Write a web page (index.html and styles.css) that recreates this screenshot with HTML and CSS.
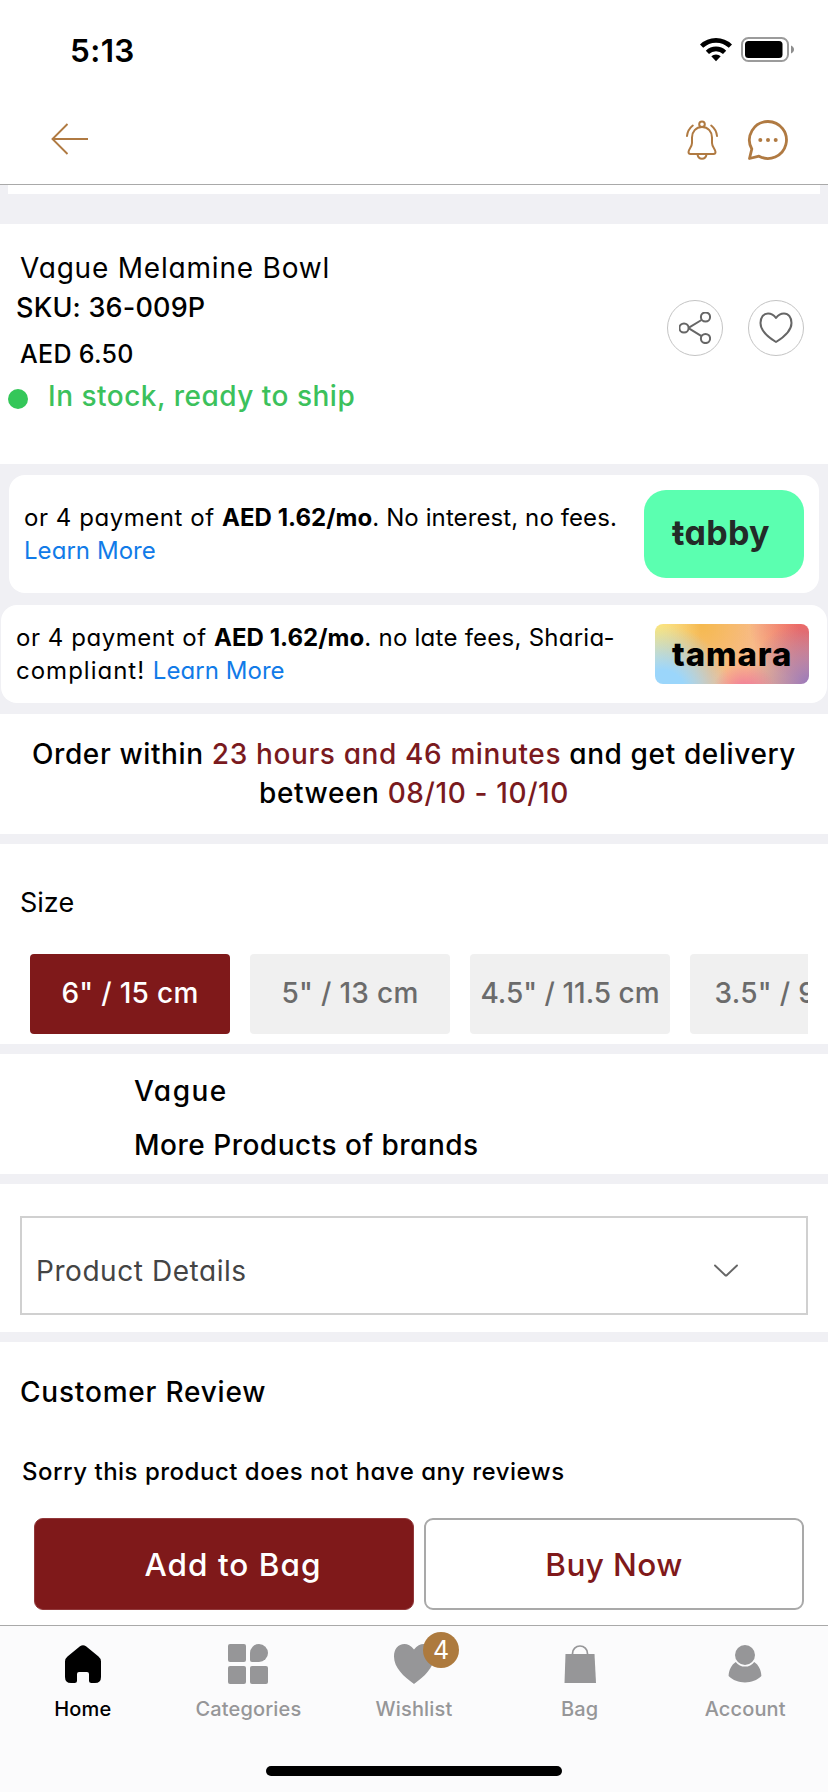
FILE: index.html
```html
<!DOCTYPE html>
<html lang="en">
<head>
<meta charset="utf-8">
<title>Vague Melamine Bowl</title>
<link rel="stylesheet" href="styles.css">
</head>
<body>
<div class="screen">
  <header class="header">
    <div class="status">
      <span class="time">5:13</span>
      <div class="status-icons">
        <svg width="32" height="24" viewBox="0 0 32 24" fill="none" stroke="#000" stroke-width="4.6"><path d="M1.6 8.2a20.6 20.6 0 0 1 28.800 0"/><path d="M7.400 14.300a12.400 12.400 0 0 1 17.200 0"/><path d="M11.300 18.300a6.800 6.800 0 0 1 9.400 0L16 23.200z" fill="#000" stroke="none"/></svg>
        <svg width="54" height="26" viewBox="0 0 54 26"><rect x="1" y="1" width="46" height="23" rx="6.500" fill="none" stroke="#9b9b9b" stroke-width="2"/><rect x="4" y="4" width="37.500" height="17" rx="3.500"/><path d="M50 8.500c4 1.500 4 6.500 0 8z" fill="#8e8e8e"/></svg>
      </div>
    </div>
    <div class="navbar">
      <svg class="back" width="38" height="32" viewBox="0 0 38 32" fill="none" stroke="#b07a42" stroke-width="1.900"><path d="M37 16H1.500M16.500 1L1.500 16l15 15"/></svg>
      <div class="nav-actions">
        <svg width="34" height="40" viewBox="0 0 34 40" fill="none" stroke="#b07a42" stroke-width="2" stroke-linecap="round" stroke-linejoin="round"><circle cx="17" cy="4.300" r="2.800"/><path d="M17 7c-6.200 0-10 4.800-10 10.500v5.500c0 4-3.500 6-3.500 9 0 1.400.9 2 2 2h23c1.100 0 2-.6 2-2 0-3-3.500-5-3.500-9v-5.500C27 11.800 23.200 7 17 7z"/><path d="M12.500 34.500c.5 2.800 2.300 4.200 4.500 4.200s4-1.400 4.500-4.200M7.800 5.500C4.600 8 2.500 11.500 2 16M26.200 5.500C29.400 8 31.500 11.500 32 16"/></svg>
        <svg width="42" height="42" viewBox="0 0 42 42"><path d="M21 2.500A18.500 18.500 0 0 0 4.800 30L2.500 39.500l9.500-2.300A18.500 18.500 0 1 0 21 2.500z" fill="none" stroke="#b07a42" stroke-width="2.800" stroke-linejoin="round"/><g fill="#b07a42"><circle cx="13.300" cy="21" r="2"/><circle cx="21" cy="21" r="2"/><circle cx="28.700" cy="21" r="2"/></g></svg>
      </div>
    </div>
  </header>
  <div class="gallery-end"></div>

  <section class="product">
    <div class="product-info">
      <h1 class="title">Vague Melamine Bowl</h1>
      <p class="sku">SKU: 36-009P</p>
      <p class="price">AED 6.50</p>
      <p class="stock"><i class="dot"></i>In stock, ready to ship</p>
    </div>
    <div class="product-actions">
      <button class="round"><svg width="32" height="32" viewBox="0 0 32 32" fill="none" stroke="#666" stroke-width="2"><circle cx="5" cy="16" r="4.600"/><circle cx="26.500" cy="5" r="4.600"/><circle cx="26.500" cy="26.500" r="4.600"/><path d="M9.500 15.800L22.500 8M9.500 16.200l13 8"/></svg></button>
      <button class="round"><svg width="34" height="32" viewBox="0 0 34 32" fill="none" stroke="#666" stroke-width="2" stroke-linejoin="round"><path d="M17 6C14.500 2.500 11.500 1.500 9 1.500 4.500 1.500 1.500 5.500 1.500 11c0 8 6.500 13.500 15.500 19 9-5.500 15.500-11 15.500-19 0-5.500-3-9.500-7.500-9.500-2.500 0-5.500 1-8 4.500z"/></svg></button>
    </div>
  </section>

  <section class="payments">
    <div class="pay pay-tabby">
      <p class="pay-text"><span class="lead">or 4 payment of </span><b>AED 1.62/mo</b>. No interest, no fees.<br><a>Learn More</a></p>
      <div class="tabby">ŧabby</div>
    </div>
    <div class="pay pay-tamara">
      <p class="pay-text"><span class="lead">or 4 payment of </span><b>AED 1.62/mo</b><span class="tail">. no late fees, Sharia-</span><br><span class="lead lead-wide">compliant! </span><a>Learn More</a></p>
      <div class="tamara">tamara</div>
    </div>
  </section>

  <section class="delivery">
    <p>Order within <em>23 hours and 46 minutes</em> and get delivery<br>between <em>08/10 - 10/10</em></p>
  </section>

  <section class="sizes">
    <h2 class="size-label">Size</h2>
    <div class="chips">
      <div class="chip chip-on">6" / 15 cm</div>
      <div class="chip">5" / 13 cm</div>
      <div class="chip chip-long">4.5" / 11.5 cm</div>
      <div class="chip">3.5" / 9 cm</div>
    </div>
  </section>

  <section class="brand">
    <p class="brand-name">Vague</p>
    <p>More Products of brands</p>
  </section>

  <section class="details">
    <div class="details-box"><span>Product Details</span>
      <svg width="26" height="16" viewBox="0 0 26 16" fill="none" stroke="#666" stroke-width="1.900" stroke-linecap="round" stroke-linejoin="round"><path d="M2 2.500L12 12q1 1 2 0L24 2.500"/></svg>
    </div>
  </section>

  <section class="reviews">
    <h2>Customer Review</h2>
    <p>Sorry this product does not have any reviews</p>
    <div class="cta">
      <button class="btn btn-add">Add to Bag</button>
      <button class="btn btn-buy">Buy Now</button>
    </div>
  </section>

  <nav class="tabs">
    <div class="tab tab-on"><svg width="40" height="40" viewBox="0 0 40 40"><path d="M17 2.300q3-2.300 6 0l12.500 10.200q2.500 2 2.500 5V33q0 6-6 6h-3.500q-2.500 0-2.500-2.500V30q0-2-2-2h-8q-2 0-2 2v6.500q0 2.500-2.500 2.500H8q-6 0-6-6V17.500q0-3 2.500-5z"/></svg><span>Home</span></div>
    <div class="tab"><svg width="40" height="40" viewBox="0 0 40 40" fill="#969698"><rect width="18" height="18" rx="2"/><path d="M22 9a9 9 0 1 1 9 9h-7q-2 0-2-2z"/><rect y="22" width="18" height="18" rx="2"/><rect x="22" y="22" width="18" height="18" rx="2"/></svg><span>Categories</span></div>
    <div class="tab"><svg width="40" height="40" viewBox="0 0 40 40" fill="#969698"><path d="M20 5.500C17 1.500 13.500 0 10.500 0 4 0 0 5 0 12.500c0 11 9.500 20 20 27.500 10.500-7.500 20-16.500 20-27.500C40 5 36 0 29.500 0 26.500 0 23 1.500 20 5.500z"/></svg><span>Wishlist</span><span class="badge">4</span></div>
    <div class="tab"><svg width="40" height="40" viewBox="0 0 40 40"><path d="M5.500 10h29L36 39H4.500z" fill="#969698"/><path d="M12.500 11V9.500a7.500 7.500 0 0 1 15 0V11" fill="none" stroke="#969698" stroke-width="1.700"/></svg><span>Bag</span></div>
    <div class="tab"><svg width="40" height="40" viewBox="0 0 40 40" fill="#969698"><circle cx="20" cy="11" r="10"/><path d="M10.800 18a11.500 11.500 0 0 0 18.400 0c4.500 3 7 8 7.200 14C28 40.500 12 40.500 3.600 32c.2-6 2.700-11 7.200-14z"/></svg><span>Account</span></div>
    <div class="home-bar"></div>
  </nav>
</div>
</body>
</html>
```
FILE: styles.css
```css
* { box-sizing: border-box; margin: 0; padding: 0; }
body { background: #fff; }
.screen { width: 828px; height: 1792px; overflow: hidden; display: flex; flex-direction: column; background: #f0f0f4; color: #000; font-family: Inter, sans-serif; font-feature-settings: "cv11"; }
h1, h2 { font-weight: 400; }
p, h1, h2, span { white-space: nowrap; }
svg { display: block; flex: none; }
em { font-style: normal; color: #7a1a1e; }
button { border: 0; background: none; font: inherit; font-feature-settings: inherit; color: inherit; }

.header { height: 185px; flex: none; background: #fff; border-bottom: 1px solid #a9a9a9; }
.status { height: 100px; display: flex; justify-content: space-between; padding: 0 33px 0 70px; align-items: center; }
.time { font-size: 31.5px; font-weight: 600; letter-spacing: .4px; }
.status-icons { display: flex; gap: 9px; align-items: center; }
.navbar { height: 78px; display: flex; justify-content: space-between; align-items: center; padding: 0 39px 0 51px; }
.nav-actions { display: flex; gap: 28px; align-items: center; padding-top: 2px; }
.gallery-end { height: 9px; margin: 0 8px 30px; background: #fff; flex: none; }

.product { height: 240px; flex: none; background: #fff; display: flex; justify-content: space-between; padding: 24px 24px 0 8px; }
.product-info { line-height: 40px; }
.title { font-size: 28px; letter-spacing: .8px; padding-left: 12px; }
.sku { font-size: 27px; font-weight: 500; letter-spacing: .2px; padding-left: 8px; }
.price { font-size: 25px; font-weight: 500; letter-spacing: .3px; padding-left: 12px; margin-top: 6px; }
.stock { font-size: 28px; font-weight: 500; letter-spacing: .5px; color: #3cc15c; display: flex; align-items: center; gap: 20px; margin-top: 2px; }
.dot { width: 20px; height: 20px; border-radius: 50%; background: #34c759; margin-top: 6px; }
.product-actions { display: flex; gap: 25px; padding-top: 52px; }
.round { width: 56px; height: 56px; border: 1px solid #c4c4c4; border-radius: 50%; display: flex; align-items: center; justify-content: center; }

.payments { height: 250px; flex: none; padding: 11px 1px 11px; display: flex; flex-direction: column; gap: 12px; }
.pay { background: #fff; border-radius: 16px; display: flex; justify-content: space-between; }
.pay-tabby { height: 118px; margin: 0 8px; padding: 15px 15px 0; }
.pay-tamara { height: 98px; padding: 19px 18px 0 15px; }
.pay-text { font-size: 24px; line-height: 33px; letter-spacing: .1px; }
.pay-tabby .pay-text { padding-top: 11px; }
.pay-tamara .pay-text { margin-top: -3px; }
.pay-text a { color: #117be8; letter-spacing: .05px; }
.pay-text b { font-weight: 700; letter-spacing: .05px; }
.lead { letter-spacing: .55px; }
.lead-wide { letter-spacing: 1px; }
.tail { letter-spacing: .25px; }
.tabby { width: 160px; height: 88px; border-radius: 22px; background: #5bffb0; color: #232b28; font-size: 34px; font-weight: 700; letter-spacing: .3px; line-height: 86px; padding-left: 28px; }
.tamara { width: 154px; height: 60px; border-radius: 8px; font-size: 33px; font-weight: 800; font-feature-settings: normal; letter-spacing: .9px; line-height: 60px; padding-left: 17px; background: radial-gradient(circle at 58% 115%, #f0709e, transparent 28%), radial-gradient(circle at 100% 100%, #9a78bb, transparent 38%), radial-gradient(circle at 98% 0, #ef6a64 5%, transparent 35%), radial-gradient(circle at 5% 115%, #9bd6fb 14%, transparent 42%), radial-gradient(circle at 0 10%, #fbe57a, transparent 28%), radial-gradient(circle at 30% 0, #f5b94e, transparent 45%), linear-gradient(90deg, #fbe3b0, #f8bd84 35%, #f6b78e); }

.delivery { height: 120px; flex: none; background: #fff; padding-top: 21px; text-align: center; font-size: 28px; font-weight: 500; letter-spacing: .62px; line-height: 39px; margin-bottom: 10px; }
.sizes { height: 200px; flex: none; background: #fff; padding: 39px 20px 0; margin-bottom: 10px; }
.size-label { font-size: 27px; line-height: 40px; }
.chips { display: flex; gap: 20px; margin-top: 31px; padding-left: 10px; overflow: hidden; }
.chip { width: 200px; height: 80px; flex: none; border-radius: 4px; background: #f0f0f0; color: #6b6b6b; font-size: 28px; font-weight: 500; letter-spacing: .3px; line-height: 79px; text-align: center; }
.chip-long { letter-spacing: 0; }
.chip-on { background: #7f191a; color: #fff; }

.brand { height: 120px; flex: none; background: #fff; padding: 10px 0 0 134px; font-size: 28px; font-weight: 500; letter-spacing: .5px; line-height: 54px; margin-bottom: 10px; }
.brand-name { letter-spacing: 1.5px; }
.details { height: 148px; flex: none; background: #fff; padding: 32px 20px 0; margin-bottom: 10px; }
.details-box { height: 99px; border: 2px solid #d0d0d0; display: flex; justify-content: space-between; align-items: center; padding: 11px 67px 0 14px; font-size: 28px; letter-spacing: .55px; color: #444; }

.reviews { height: 283px; flex: none; background: #fff; padding: 30px 24px 0 20px; }
.reviews h2 { font-size: 28px; font-weight: 500; letter-spacing: .8px; line-height: 40px; }
.reviews p { font-size: 24px; font-weight: 500; letter-spacing: .5px; line-height: 40px; margin-top: 40px; padding-left: 2px; }
.cta { display: flex; gap: 10px; padding-left: 14px; margin-top: 26px; }
.btn { width: 380px; height: 92px; border-radius: 9px; border: 2px solid #a9a9a9; font-size: 31.5px; font-weight: 500; letter-spacing: .4px; padding-top: 1px; }
.btn-add { background: #7f191a; border: 1px solid #91383a; color: #fff; padding-left: 18px; letter-spacing: 1px; }
.btn-buy { color: #7f191a; }

.tabs { height: 167px; flex: none; background: #fbfbfc; border-top: 1px solid #a9a9a9; display: grid; grid-template-columns: repeat(5, 1fr); padding-top: 18px; position: relative; }
.tab { display: flex; flex-direction: column; align-items: center; position: relative; color: #969698; font-size: 20px; font-weight: 500; letter-spacing: .15px; line-height: 30px; gap: 10px; font-feature-settings: normal; }
.tab-on { color: #000; }
.badge { position: absolute; left: 92px; top: -12px; width: 36px; height: 36px; border-radius: 50%; background: #ad7a3e; color: #fff; font-size: 25px; font-weight: 400; line-height: 36px; text-align: center; }
.home-bar { position: absolute; left: 266px; top: 140px; width: 296px; height: 10px; border-radius: 5px; background: #000; }
```
